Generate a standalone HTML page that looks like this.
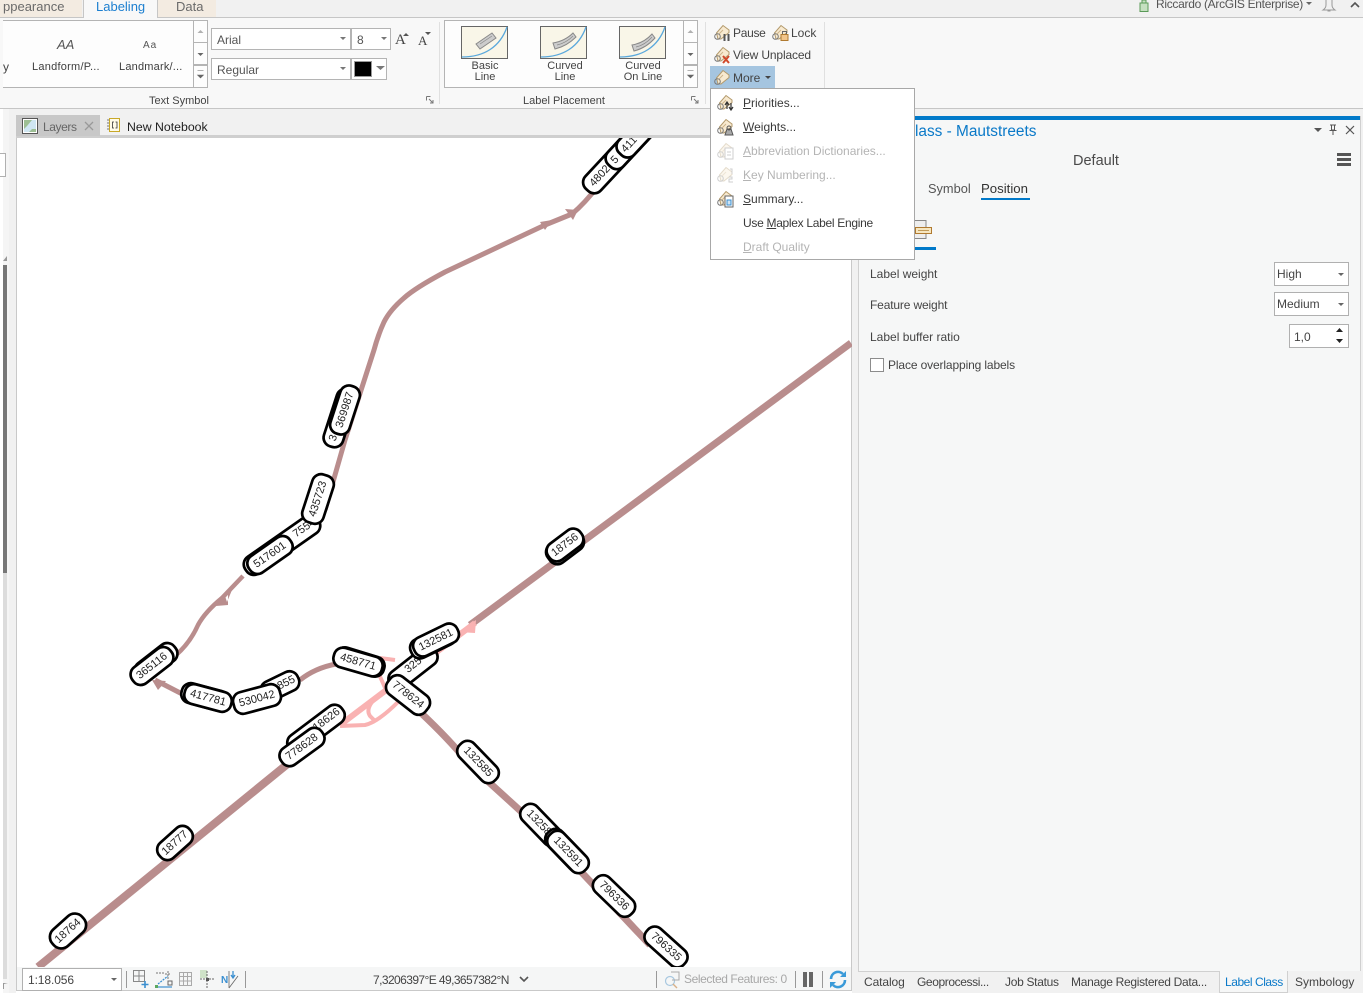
<!DOCTYPE html>
<html><head><meta charset="utf-8"><title>Label Class</title>
<style>
html,body{margin:0;padding:0;width:1363px;height:993px;overflow:hidden;background:#fff}
body{position:relative;font-family:"Liberation Sans",sans-serif;font-size:12px;color:#444}
.t{position:absolute;white-space:nowrap;line-height:16px;height:16px}
.b{position:absolute;box-sizing:border-box}
.c{text-align:center}
u{text-underline-offset:1px}
svg{position:absolute;overflow:visible}
.dis{color:#b4b4b4}
.m{color:#3a3a3a;left:743px}
.lab text{font:11px "Liberation Sans",sans-serif;fill:#222;text-anchor:middle;dominant-baseline:central}
.lab rect{fill:#fff;stroke:#000;stroke-width:2.700}
</style></head><body>

<!-- top strip -->
<div class="b" style="left:0;top:0;width:1363px;height:18px;background:#f1f1f1;border-bottom:1px solid #c6c6c6"></div>
<div class="b" style="left:0;top:0;width:82px;height:17px;background:#f3ebe1"></div>
<div class="b" style="left:83px;top:0;width:75px;height:18px;background:#f8f8f8;border-left:1px solid #c6c6c6;border-right:1px solid #c6c6c6"></div>
<div class="b" style="left:158px;top:0;width:58px;height:17px;background:#f3ebe1"></div>
<div class="t" style="left:3px;top:-1px;font-size:13px;color:#6a6a6a">ppearance</div>
<div class="t" style="left:96px;top:-1px;font-size:13px;color:#1c7fd0">Labeling</div>
<div class="t" style="left:176px;top:-1px;font-size:13px;color:#6a6a6a">Data</div>
<svg style="left:1138px;top:0" width="12" height="12"><path d="M2 3h8v8.500H2z M4 3V0h4v3" fill="#c5e0c0" stroke="#5a9a58" stroke-width="1"/></svg>
<div class="t" style="left:1156px;top:-4px;font-size:12px;letter-spacing:-.3px;color:#555">Riccardo (ArcGIS Enterprise)</div>
<svg style="left:1306px;top:2px" width="6" height="4"><path d="M0 0h6L3 3z" fill="#666"/></svg>
<svg style="left:1322px;top:0" width="15" height="12"><path d="M4 0v5q0 3-3 5h12q-3-2-3-5V0M5.500 11h3" fill="none" stroke="#999"/></svg>
<svg style="left:1350px;top:2px" width="10" height="6"><path d="M1 5l4-4 4 4" fill="none" stroke="#555" stroke-width="1.600"/></svg>

<!-- ribbon -->
<div class="b" style="left:0;top:18px;width:1363px;height:91px;background:#f8f8f8;border-bottom:1px solid #c6c6c6"></div>
<div class="b" style="left:0;top:109px;width:1363px;height:29px;background:#f1f1f1"></div>

<!-- gallery 1 -->
<div class="b" style="left:3px;top:20px;width:205px;height:68px;background:#fdfdfd;border:1px solid #b4b4b4;border-left:0"></div>
<div class="t" style="left:57px;top:37px;font-size:13px;font-style:italic;color:#555">AA</div>
<div class="t" style="left:143px;top:38px;font-size:10px;letter-spacing:1px;color:#555">Aa</div>
<div class="t" style="left:3px;top:59px;color:#444">y</div>
<div class="t" style="left:32px;top:59px;font-size:11px;letter-spacing:.25px;color:#3e3e3e">Landform/P...</div>
<div class="t" style="left:119px;top:59px;font-size:11px;letter-spacing:.2px;color:#3e3e3e">Landmark/...</div>
<div class="b" style="left:193px;top:20px;width:15px;height:23px;background:#fdfdfd;border:1px solid #b4b4b4"></div>
<div class="b" style="left:193px;top:43px;width:15px;height:22px;background:#fdfdfd;border:1px solid #b4b4b4;border-top:0"></div>
<div class="b" style="left:193px;top:65px;width:15px;height:23px;background:#fdfdfd;border:1px solid #b4b4b4"></div>
<svg style="left:193px;top:20px" width="15" height="68"><path d="M4.500 13l3-3 3 3z" fill="#b0b0b0"/><path d="M4.500 33h6l-3 3z" fill="#666"/><path d="M4.500 50.500h6M4.500 55h6l-3 3z" fill="#666" stroke="#666" stroke-width=".6"/></svg>

<!-- font boxes -->
<div class="b" style="left:211px;top:28px;width:140px;height:22px;background:#fff;border:1px solid #b4b4b4"></div>
<div class="b" style="left:351px;top:28px;width:40px;height:22px;background:#fff;border:1px solid #b4b4b4"></div>
<div class="b" style="left:211px;top:58px;width:140px;height:22px;background:#fff;border:1px solid #b4b4b4"></div>
<div class="b" style="left:351px;top:58px;width:36px;height:22px;background:#fff;border:1px solid #b4b4b4"></div>
<div class="t" style="left:217px;top:32px;color:#555">Arial</div>
<div class="t" style="left:357px;top:32px;color:#555">8</div>
<div class="t" style="left:217px;top:62px;color:#555">Regular</div>
<div class="b" style="left:354px;top:61px;width:18px;height:16px;background:#000;border:1px solid #999"></div>
<svg style="left:340px;top:37px" width="50" height="40"><path d="M0 0h6L3 3zM41 0h6l-3 3zM0 30h6l-3 3zM36 29h9l-4.500 4z" fill="#777"/></svg>
<div class="t" style="left:395px;top:32px;font:15px 'Liberation Serif',serif;color:#444">A</div>
<div class="t" style="left:418px;top:33px;font:13px 'Liberation Serif',serif;color:#444">A</div>
<svg style="left:403px;top:32px" width="30" height="6"><path d="M0 4l3-3 3 3zM22 0h6l-3 3z" fill="#555"/></svg>

<div class="b" style="left:439px;top:22px;width:1px;height:82px;background:#e0e0e0"></div>
<div class="t" style="left:149px;top:93px;font-size:11px;color:#444">Text Symbol</div>
<svg style="left:426px;top:96px" width="8" height="8"><path d="M.5 .5h4M.5 .5v4M3 3l4 4M7 4v3H4" fill="none" stroke="#777"/></svg>

<!-- gallery 2 -->
<div class="b" style="left:444px;top:20px;width:254px;height:68px;background:#fdfdfd;border:1px solid #b4b4b4"></div>
<div class="b" style="left:683px;top:20px;width:15px;height:23px;border:1px solid #b4b4b4"></div>
<div class="b" style="left:683px;top:43px;width:15px;height:22px;border:1px solid #b4b4b4;border-top:0"></div>
<div class="b" style="left:683px;top:65px;width:15px;height:23px;border:1px solid #b4b4b4"></div>
<svg style="left:683px;top:20px" width="15" height="68"><path d="M4.500 13l3-3 3 3z" fill="#b0b0b0"/><path d="M4.500 33h6l-3 3z" fill="#666"/><path d="M4.500 50.500h6M4.500 55h6l-3 3z" fill="#666" stroke="#666" stroke-width=".6"/></svg>
<svg style="left:461px;top:26px" width="48" height="34"><rect x=".5" y=".5" width="46" height="32" fill="#f9f6e8" stroke="#666"/><path d="M1 31c22 0 38-10 45-30" fill="none" stroke="#5aa8dc" stroke-width="1.300"/><path d="M15 18l16-11 4 5-16 11z" fill="#ccc" stroke="#888"/><path d="M19 18l12-8" stroke="#888" stroke-width=".7"/></svg>
<svg style="left:540px;top:26px" width="48" height="34"><rect x=".5" y=".5" width="46" height="32" fill="#f9f6e8" stroke="#666"/><path d="M1 31c22 0 38-10 45-30" fill="none" stroke="#5aa8dc" stroke-width="1.300"/><path d="M13 17q12-2 20-10l3 4q-9 9-21 12z" fill="#ccc" stroke="#888"/><path d="M17 19q9-2 16-9" fill="none" stroke="#888" stroke-width=".7"/></svg>
<svg style="left:619px;top:26px" width="48" height="34"><rect x=".5" y=".5" width="46" height="32" fill="#f9f6e8" stroke="#666"/><path d="M1 31c22 0 38-10 45-30" fill="none" stroke="#5aa8dc" stroke-width="1.300"/><path d="M13 19q12-2 20-11l3 4q-9 10-21 13z" fill="#ccc" stroke="#888"/><path d="M17 21q9-2 16-10" fill="none" stroke="#888" stroke-width=".7"/></svg>
<div class="t c" style="left:455px;width:60px;top:61px;font-size:11px;line-height:11px;height:24px;color:#444">Basic<br>Line</div>
<div class="t c" style="left:535px;width:60px;top:61px;font-size:11px;line-height:11px;height:24px;color:#444">Curved<br>Line</div>
<div class="t c" style="left:613px;width:60px;top:61px;font-size:11px;line-height:11px;height:24px;color:#444">Curved<br>On Line</div>
<div class="t" style="left:523px;top:93px;font-size:11px;color:#444">Label Placement</div>
<svg style="left:691px;top:96px" width="8" height="8"><path d="M.5 .5h4M.5 .5v4M3 3l4 4M7 4v3H4" fill="none" stroke="#777"/></svg>
<div class="b" style="left:705px;top:22px;width:1px;height:82px;background:#e0e0e0"></div>
<div class="b" style="left:824px;top:22px;width:1px;height:82px;background:#e0e0e0"></div>

<!-- tag icon -->
<svg width="0" height="0" style="position:absolute"><defs>
<symbol id="tag" viewBox="0 0 18 18"><path d="M3.500 9L10 1.500l6 4.500v2.500L8 15H5z" fill="#f8ead0" stroke="#b39a6c"/><circle cx="4.500" cy="12.500" r="2.800" fill="none" stroke="#7a7a7a"/><path d="M6 10l4-4" stroke="#cdb48a"/></symbol>
</defs></svg>

<svg style="left:713px;top:24px" width="18" height="18"><use href="#tag"/><path d="M11.500 10v7M15.500 10v7" stroke="#555" stroke-width="2"/></svg>
<div class="t" style="left:733px;top:25px;letter-spacing:-.3px;color:#444">Pause</div>
<svg style="left:771px;top:24px" width="18" height="18"><use href="#tag"/><rect x="10" y="10.500" width="7" height="6" fill="#f2c58a" stroke="#b07a30"/><path d="M11.500 10V7.500h4V10" fill="none" stroke="#666"/></svg>
<div class="t" style="left:791px;top:25px;color:#444">Lock</div>
<svg style="left:713px;top:46px" width="18" height="18"><use href="#tag"/><path d="M10 10l6 7M16 10l-6 7" stroke="#d1492a" stroke-width="2"/></svg>
<div class="t" style="left:733px;top:47px;letter-spacing:-.15px;color:#444">View Unplaced</div>
<div class="b" style="left:710px;top:66px;width:65px;height:23px;background:#a5c5e0"></div>
<svg style="left:713px;top:69px" width="18" height="18"><use href="#tag"/></svg>
<div class="t" style="left:733px;top:70px;color:#444">More</div>
<svg style="left:765px;top:76px" width="6" height="4"><path d="M0 0h6L3 3z" fill="#444"/></svg>

<!-- map area -->
<div class="b" style="left:0;top:109px;width:9px;height:884px;background:#f5f5f5"></div>
<div class="b" style="left:0;top:109px;width:3px;height:884px;background:#fff"></div>
<div class="b" style="left:0;top:153px;width:6px;height:24px;background:#fff;border:1px solid #b0b0b0;border-left:0"></div>
<svg style="left:3px;top:256px" width="5" height="6"><path d="M4 0v5H0z" fill="#999"/></svg>
<div class="b" style="left:3px;top:265px;width:4px;height:308px;background:#777"></div>
<div class="b" style="left:3px;top:573px;width:4px;height:406px;background:#dcdcdc"></div>
<svg style="left:3px;top:983px" width="5" height="6"><path d="M0 0h5L1 1v5H0z" fill="#999"/></svg>
<div class="b" style="left:9px;top:109px;width:7px;height:884px;background:#f1f1f1"></div>
<div class="b" style="left:16px;top:116px;width:836px;height:875px;background:#fff;border-left:1px solid #c9c9c9;border-right:1px solid #c9c9c9;border-bottom:1px solid #c9c9c9"></div>
<div class="b" style="left:16px;top:116px;width:836px;height:20px;background:#f1f1f1"></div>
<div class="b" style="left:16px;top:135px;width:836px;height:3px;background:#cfcfcf"></div>
<div class="b" style="left:16px;top:115px;width:84px;height:21px;background:#c8c8c8"></div>
<svg style="left:22px;top:118px" width="16" height="16"><rect x=".5" y=".5" width="15" height="15" fill="#fff" stroke="#555"/><rect x="2" y="2" width="12" height="12" fill="#cfe6f2"/><path d="M2 2h8L5 8 2 11zM14 14H7l3-3h4z" fill="#9dbf94"/></svg>
<div class="t" style="left:43px;top:119px;letter-spacing:-.4px;color:#666">Layers</div>
<svg style="left:84px;top:121px" width="10" height="10"><path d="M1 1l8 8M9 1l-8 8" stroke="#999" stroke-width="1.300"/></svg>
<svg style="left:107px;top:118px" width="14" height="15"><rect x="2.500" y=".5" width="10" height="13" fill="#fffbe8" stroke="#c8a828"/><path d="M0 2h2M0 5h2M0 8h2M0 11h2" stroke="#777"/><path d="M7 4H5.500v6H7M8.500 4H10v6H8.500" fill="none" stroke="#333" stroke-width=".8"/></svg>
<div class="t" style="left:127px;top:119px;color:#222;font-size:12.300px">New Notebook</div>

<!-- map -->
<svg style="left:0;top:0;clip-path:inset(138px 511px 26px 17px)" width="1363" height="993" viewBox="0 0 1363 993">
<g fill="none" stroke-linejoin="round" stroke-linecap="butt">
<path d="M851 343L470 625" stroke="#b98d8d" stroke-width="7"/>
<path d="M290 762L38 967" stroke="#b98d8d" stroke-width="8"/>
<path d="M598 186Q585 203 572 214L545 225L445 272Q415 288 404 298Q390 310 384 322Q378 335 374 350L345 440L325 510" stroke="#b98d8d" stroke-width="5"/>
<path d="M243 576L222 598Q205 612 198 625Q190 643 176 655" stroke="#b98d8d" stroke-width="4.500"/>
<path d="M155 680L190 698" stroke="#b98d8d" stroke-width="5"/>
<path d="M300 680Q315 668 336 664" stroke="#b98d8d" stroke-width="5"/>
<path d="M420 712Q450 740 470 765L525 815L570 860L650 945" stroke="#b98d8d" stroke-width="7"/>
<path d="M475 623L340 725" stroke="#f9b2b2" stroke-width="6"/>
<path d="M340 726L365 725Q378 722 398 702" stroke="#f9b2b2" stroke-width="4"/>
<path d="M372 702Q366 710 370 716L376 722" stroke="#f9b2b2" stroke-width="4"/>
<path d="M380 658L395 660M378 672L386 690" stroke="#f9b2b2" stroke-width="4"/>
</g>
<path d="M540 222l12-2-7 10zM578 210l-13-1 8 11zM216 606l12-14 0 13zM152 680l14 1-8 9zM232 590l-8 3 3 9z" fill="#b98d8d"/>
<path d="M458 632l18-12-1 13z" fill="#f9b2b2"/>
<g class="lab">
<g transform="translate(68,931) rotate(-42)"><rect x="-20" y="-11" width="40" height="22" rx="10"/><text>18764</text></g>
<g transform="translate(175,843) rotate(-42)"><rect x="-20" y="-10" width="40" height="20" rx="9"/><text>18777</text></g>
<g transform="translate(316,729) rotate(-37)"><rect x="-33" y="-10" width="66" height="20" rx="9"/><text x="14" y="-1">18626</text></g>
<g transform="translate(302,747) rotate(-36)"><rect x="-25" y="-10" width="50" height="20" rx="9"/><text>778628</text></g>
<g transform="translate(565,547) rotate(-37)"><rect x="-20" y="-11" width="40" height="22" rx="9"/></g>
<g transform="translate(565,545) rotate(-37)"><rect x="-20" y="-10" width="40" height="20" rx="9"/><text>18756</text></g>
<g transform="translate(413,668) rotate(-38)"><rect x="-28" y="-10" width="56" height="20" rx="9"/><text x="2" y="-2">325</text></g>
<g transform="translate(433,642) rotate(-26)"><rect x="-24" y="-10" width="48" height="20" rx="9"/></g>
<g transform="translate(436,640) rotate(-26)"><rect x="-24" y="-10" width="48" height="20" rx="9"/><text>132581</text></g>
<g transform="translate(360,662) rotate(17)"><rect x="-25" y="-10" width="50" height="20" rx="9"/></g>
<g transform="translate(358,662) rotate(16)"><rect x="-25" y="-10" width="50" height="20" rx="9"/><text>458771</text></g>
<g transform="translate(408,695) rotate(38)"><rect x="-24" y="-11" width="48" height="22" rx="9"/><text>778624</text></g>
<g transform="translate(280,686) rotate(-26)"><rect x="-20" y="-10" width="40" height="20" rx="9"/><text x="7">855</text></g>
<g transform="translate(205,697) rotate(15)"><rect x="-24" y="-10" width="48" height="20" rx="9"/></g>
<g transform="translate(208,698) rotate(15)"><rect x="-24" y="-10" width="48" height="20" rx="9"/><text>417781</text></g>
<g transform="translate(257,699) rotate(-15)"><rect x="-24" y="-11" width="48" height="22" rx="9"/><text>530042</text></g>
<g transform="translate(156,662) rotate(-38)"><rect x="-24" y="-10" width="48" height="20" rx="9"/></g>
<g transform="translate(152,666) rotate(-38)"><rect x="-24" y="-10" width="48" height="20" rx="9"/><text>365116</text></g>
<g transform="translate(282,545) rotate(-35)"><rect x="-44" y="-10" width="88" height="20" rx="9"/><text x="28" y="-1">7554</text></g>
<g transform="translate(270,555) rotate(-35)"><rect x="-25" y="-10" width="50" height="20" rx="9"/><text>517601</text></g>
<g transform="translate(318,499) rotate(-72)"><rect x="-25" y="-11" width="50" height="22" rx="9"/><text>435723</text></g>
<g transform="translate(340,418) rotate(-72)"><rect x="-30" y="-10" width="60" height="20" rx="9"/><text x="-21">3</text></g>
<g transform="translate(345,410) rotate(-72)"><rect x="-25" y="-10" width="50" height="20" rx="9"/><text>369987</text></g>
<g transform="translate(600,176) rotate(-47)"><rect x="-19" y="-10.500" width="110" height="21" rx="9"/><text x="0">4802</text></g>
<g transform="translate(600,176) rotate(-47)"><rect x="14" y="-10.500" width="80" height="21" rx="9"/><text x="22">5</text></g>
<g transform="translate(600,176) rotate(-47)"><rect x="30" y="-10.500" width="60" height="21" rx="9"/><text x="43">411</text></g>
<g transform="translate(478,762) rotate(46)"><rect x="-25" y="-10" width="50" height="20" rx="9"/><text>132585</text></g>
<g transform="translate(541,825) rotate(46)"><rect x="-25" y="-10" width="50" height="20" rx="9"/><text x="-3">13258</text></g>
<g transform="translate(566,850) rotate(46)"><rect x="-25" y="-10" width="50" height="20" rx="9"/></g>
<g transform="translate(568,852) rotate(46)"><rect x="-25" y="-10" width="50" height="20" rx="9"/><text>132591</text></g>
<g transform="translate(614,896) rotate(44)"><rect x="-25" y="-10" width="50" height="20" rx="9"/><text>796336</text></g>
<g transform="translate(666,947) rotate(42)"><rect x="-25" y="-10" width="50" height="20" rx="9"/><text>796335</text></g>
</g>
</svg>

<!-- map status -->
<div class="b" style="left:17px;top:967px;width:834px;height:23px;background:#f5f6f6"></div>
<div class="b" style="left:22px;top:968px;width:100px;height:23px;background:#fff;border:1px solid #b0b0b0"></div>
<div class="t" style="left:28px;top:972px;letter-spacing:-.1px;color:#444">1:18.056</div>
<svg style="left:111px;top:978px" width="6" height="4"><path d="M0 0h6L3 3z" fill="#666"/></svg>
<div class="b" style="left:126px;top:971px;width:1px;height:17px;background:#999"></div>
<svg style="left:133px;top:970px" width="18" height="19"><path d="M.5 .5h11v11H.5zM6 .5v11M.5 6h11" fill="none" stroke="#888"/><path d="M12 11v7M8.500 14.500h7" stroke="#3a8fd0" stroke-width="1.600"/></svg>
<svg style="left:155px;top:970px" width="18" height="19"><path d="M3 14L13 6" stroke="#3a8fd0" stroke-width="1.200" stroke-dasharray="2 1"/><path d="M2 17h15" stroke="#3a8fd0" stroke-width="1.200"/><path d="M1 3h8M13 1v8M10 4h6" stroke="#777" stroke-dasharray="2 1"/><rect x="0" y="15" width="3" height="3" fill="#5aa860"/><rect x="13" y="11" width="4" height="4" fill="none" stroke="#666"/></svg>
<svg style="left:179px;top:972px" width="13" height="14"><path d="M.5 .5h12v13H.5zM4.500 .5v13M8.500 .5v13M.5 4.500h12M.5 9h12" fill="none" stroke="#aaa"/></svg>
<svg style="left:200px;top:970px" width="16" height="18"><rect x="0" y="0" width="7" height="8" fill="#cfe2c8"/><path d="M0 9h15M7 1v17" stroke="#666" stroke-dasharray="2 1"/><rect x="6" y="8" width="3" height="3" fill="#555"/></svg>
<svg style="left:221px;top:970px" width="18" height="19"><text x="0" y="13" style="font:bold 10px 'Liberation Sans',sans-serif;fill:#3a8fd0">N</text><path d="M8 1v17M17 6l-9 12" fill="none" stroke="#666" stroke-width=".8"/><path d="M12 1v6M10 5l2 3 2-3" fill="none" stroke="#3a8fd0" stroke-width="1.300"/></svg>
<div class="b" style="left:245px;top:971px;width:1px;height:17px;background:#999"></div>
<div class="t" style="left:373px;top:972px;letter-spacing:-.58px;color:#444">7,3206397°E 49,3657382°N</div>
<svg style="left:519px;top:976px" width="10" height="7"><path d="M1 1l4 4 4-4" fill="none" stroke="#555" stroke-width="1.600"/></svg>
<div class="b" style="left:656px;top:971px;width:1px;height:17px;background:#999"></div>
<svg style="left:664px;top:971px" width="17" height="17"><circle cx="6" cy="10" r="4.500" fill="none" stroke="#a8c8e0" stroke-width="1.200"/><path d="M9 13l4 4" stroke="#d8b088" stroke-width="1.400"/><path d="M7 1h8v8H8" fill="none" stroke="#aaa"/></svg>
<div class="t" style="left:684px;top:971px;letter-spacing:-.4px;color:#a8a8a8">Selected Features: 0</div>
<div class="b" style="left:795px;top:971px;width:1px;height:17px;background:#999"></div>
<div class="b" style="left:803px;top:972px;width:4px;height:15px;background:#666"></div>
<div class="b" style="left:809px;top:972px;width:4px;height:15px;background:#666"></div>
<div class="b" style="left:822px;top:971px;width:1px;height:17px;background:#999"></div>
<svg style="left:829px;top:970px" width="18" height="19"><path d="M2 9a7 7 0 0 1 12-5M16 10a7 7 0 0 1-12 5" fill="none" stroke="#3a9ad8" stroke-width="2.600"/><path d="M11 7h6V1zM7 12H1v6z" fill="#3a9ad8"/></svg>

<!-- right pane -->
<div class="b" style="left:852px;top:109px;width:511px;height:884px;background:#f1f1f1"></div>
<div class="b" style="left:858px;top:116px;width:503px;height:856px;background:#f6f7f7;border:1px solid #d0d0d0"></div>
<div class="b" style="left:859px;top:116px;width:501px;height:4px;background:#0079c9"></div>
<div class="t" style="left:915px;top:124px;font-size:15.400px;color:#0a79c8">lass - Mautstreets</div>
<svg style="left:1314px;top:125px" width="40" height="12"><path d="M0 3h8L4 7z" fill="#555"/><path d="M16 0h6M17.500 0v5h3V0M15.500 5.500h7M19 5.500V10" fill="none" stroke="#555"/><path d="M32 1l8 8M40 1l-8 8" stroke="#555" stroke-width="1.200"/></svg>
<div class="t" style="left:1073px;top:153px;font-size:14.500px;color:#4a4a4a">Default</div>
<div class="b" style="left:1337px;top:153px;width:14px;height:3px;background:#555"></div>
<div class="b" style="left:1337px;top:158px;width:14px;height:3px;background:#555"></div>
<div class="b" style="left:1337px;top:163px;width:14px;height:3px;background:#555"></div>
<div class="t" style="left:928px;top:181px;font-size:12.800px;color:#555">Symbol</div>
<div class="t" style="left:981px;top:181px;font-size:13.200px;color:#333">Position</div>
<div class="b" style="left:981px;top:198px;width:49px;height:2px;background:#0079c9"></div>
<svg style="left:915px;top:220px" width="18" height="20"><path d="M0 .5h11v18H0" fill="#eee" stroke="#888"/><rect x=".5" y="7.500" width="16" height="6" fill="#f6e6c0" stroke="#b07a30"/><path d="M3 10.500h11" stroke="#c09a58"/></svg>
<div class="b" style="left:915px;top:247px;width:21px;height:3px;background:#0079c9"></div>
<div class="t" style="left:870px;top:266px;color:#444">Label weight</div>
<div class="t" style="left:870px;top:297px;letter-spacing:-.15px;color:#444">Feature weight</div>
<div class="t" style="left:870px;top:329px;color:#444">Label buffer ratio</div>
<div class="b" style="left:1274px;top:262px;width:75px;height:24px;background:#fff;border:1px solid #b0b0b0"></div>
<div class="b" style="left:1274px;top:292px;width:75px;height:24px;background:#fff;border:1px solid #b0b0b0"></div>
<div class="b" style="left:1289px;top:324px;width:60px;height:24px;background:#fff;border:1px solid #b0b0b0"></div>
<div class="t" style="left:1277px;top:266px;color:#444">High</div>
<div class="t" style="left:1277px;top:296px;color:#444">Medium</div>
<div class="t" style="left:1294px;top:329px;color:#444">1,0</div>
<svg style="left:1338px;top:273px" width="7" height="4"><path d="M0 0h6L3 3z" fill="#666"/></svg>
<svg style="left:1338px;top:303px" width="7" height="4"><path d="M0 0h6L3 3z" fill="#666"/></svg>
<svg style="left:1336px;top:328px" width="8" height="16"><path d="M0 4l3.500-4 3.500 4zM0 11h7l-3.500 4z" fill="#222"/></svg>
<div class="b" style="left:870px;top:358px;width:14px;height:14px;background:#fff;border:1px solid #8c8c8c"></div>
<div class="t" style="left:888px;top:357px;letter-spacing:-.13px;color:#444">Place overlapping labels</div>

<!-- bottom tabs -->
<div class="b" style="left:859px;top:971px;width:501px;height:1px;background:#d0d0d0"></div>
<div class="b" style="left:1219px;top:971px;width:69px;height:22px;background:#f6f7f7;border:1px solid #d0d0d0;border-top:0"></div>
<div class="b" style="left:1288px;top:971px;width:73px;height:21px;background:#f1f1f1"></div>
<div class="t" style="left:864px;top:974px;letter-spacing:-.1px;color:#444">Catalog</div>
<div class="t" style="left:917px;top:974px;letter-spacing:-.4px;color:#444">Geoprocessi...</div>
<div class="t" style="left:1005px;top:974px;letter-spacing:-.3px;color:#444">Job Status</div>
<div class="t" style="left:1071px;top:974px;letter-spacing:-.3px;color:#444">Manage Registered Data...</div>
<div class="t" style="left:1225px;top:974px;letter-spacing:-.45px;color:#0a79c8">Label Class</div>
<div class="t" style="left:1295px;top:974px;color:#444">Symbology</div>

<!-- dropdown menu -->
<div class="b" style="left:710px;top:88px;width:205px;height:172px;background:#fff;border:1px solid #a8a8a8"></div>
<svg style="left:716px;top:94px" width="18" height="18"><use href="#tag"/><path d="M11 15V9M9 11l2-3 2 3M15 9v6M13 13l2 3 2-3" fill="none" stroke="#333" stroke-width="1.200"/></svg>
<svg style="left:716px;top:118px" width="18" height="18"><use href="#tag"/><path d="M9 17l2-6h4l2 6z" fill="#aaa" stroke="#555"/><circle cx="13" cy="10" r="2" fill="none" stroke="#555"/></svg>
<svg style="left:716px;top:142px;opacity:.35" width="18" height="18"><use href="#tag"/><rect x="9" y="6" width="8" height="11" fill="#fff" stroke="#777"/><path d="M11 10h4M11 13h4" stroke="#777"/></svg>
<svg style="left:716px;top:166px;opacity:.35" width="18" height="18"><use href="#tag"/><path d="M14 3h2v5M13 11h3v2h-3v3h4" fill="none" stroke="#777"/></svg>
<svg style="left:716px;top:190px" width="18" height="18"><use href="#tag"/><rect x="9" y="6" width="8" height="11" fill="#fff" stroke="#666"/><rect x="11" y="10" width="4" height="5" fill="#cfe4f4" stroke="#3a8fd0"/></svg>
<div class="t m" style="top:95px"><u>P</u>riorities...</div>
<div class="t m" style="top:119px"><u>W</u>eights...</div>
<div class="t dis" style="left:743px;top:143px"><u>A</u>bbreviation Dictionaries...</div>
<div class="t dis" style="left:743px;top:167px"><u>K</u>ey Numbering...</div>
<div class="t m" style="top:191px"><u>S</u>ummary...</div>
<div class="t m" style="top:215px;letter-spacing:-.3px">Use <u>M</u>aplex Label Engine</div>
<div class="t dis" style="left:743px;top:239px"><u>D</u>raft Quality</div>
</body></html>
